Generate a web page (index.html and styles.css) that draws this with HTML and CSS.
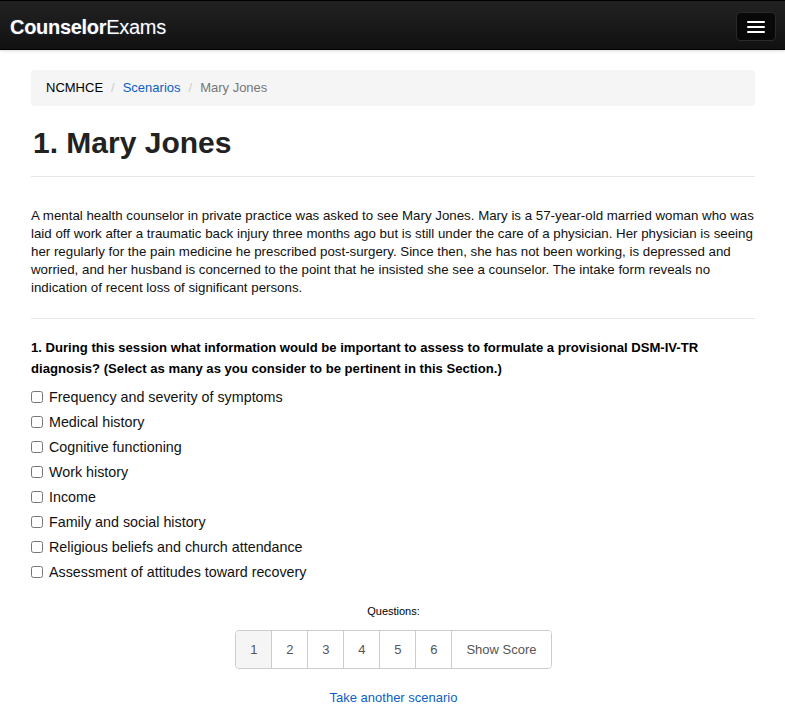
FILE: index.html
```html
<!DOCTYPE html>
<html>
<head>
<meta charset="utf-8">
<link rel="stylesheet" href="styles.css">
</head>
<body>
<nav class="navbar">
  <a class="brand"><b>Counselor</b>Exams</a>
  <button class="toggle"><span></span><span></span><span></span></button>
</nav>
<div class="container">
  <ol class="breadcrumb">
    <li>NCMHCE</li>
    <li class="sep">/</li>
    <li><a>Scenarios</a></li>
    <li class="sep">/</li>
    <li class="active">Mary Jones</li>
  </ol>
  <h2 class="page-header">1. Mary Jones</h2>
  <p class="scenario">A mental health counselor in private practice was asked to see Mary Jones. Mary is a 57-year-old married woman who was laid off work after a traumatic back injury three months ago but is still under the care of a physician. Her physician is seeing her regularly for the pain medicine he prescribed post-surgery. Since then, she has not been working, is depressed and worried, and her husband is concerned to the point that he insisted she see a counselor. The intake form reveals no indication of recent loss of significant persons.</p>
  <hr class="rule">
  <p class="question">1. During this session what information would be important to assess to formulate a provisional DSM-IV-TR diagnosis? (Select as many as you consider to be pertinent in this Section.)</p>
  <ul class="options">
    <li><label><input type="checkbox"> Frequency and severity of symptoms</label></li>
    <li><label><input type="checkbox"> Medical history</label></li>
    <li><label><input type="checkbox"> Cognitive functioning</label></li>
    <li><label><input type="checkbox"> Work history</label></li>
    <li><label><input type="checkbox"> Income</label></li>
    <li><label><input type="checkbox"> Family and social history</label></li>
    <li><label><input type="checkbox"> Religious beliefs and church attendance</label></li>
    <li><label><input type="checkbox"> Assessment of attitudes toward recovery</label></li>
  </ul>
  <div class="nav-questions">
    <div class="q-label">Questions:</div>
    <ul class="pagination">
      <li class="active">1</li>
      <li>2</li>
      <li>3</li>
      <li>4</li>
      <li>5</li>
      <li>6</li>
      <li>Show Score</li>
    </ul>
    <a class="another">Take another scenario</a>
  </div>
</div>
</body>
</html>
```
FILE: styles.css
```css
* { box-sizing: border-box; }
html, body { margin: 0; padding: 0; }
body {
  font-family: "Liberation Sans", Arial, Helvetica, sans-serif;
  color: #000;
  background: #fff;
  font-size: 13px;
  line-height: 18px;
}
.navbar {
  height: 50px;
  background: linear-gradient(#222, #111);
  border-top: 1px solid #000;
  border-bottom: 1px solid #000;
  display: flex;
  align-items: center;
  justify-content: space-between;
  padding: 0 9px 0 10px;
  box-shadow: 0 1px 3px rgba(0,0,0,0.15);
}
.brand {
  color: #fff;
  font-size: 20px;
  line-height: 24px;
  letter-spacing: -0.3px;
  margin-top: 3px;
  text-shadow: 0 0 2px rgba(120,160,255,0.35);
}
.brand b { font-weight: bold; }
.toggle {
  width: 40px;
  height: 29px;
  background: #080808;
  border: 1px solid #2a2a2a;
  border-radius: 4px;
  display: flex;
  flex-direction: column;
  align-items: center;
  justify-content: center;
  gap: 3px;
  padding: 0;
  margin-top: 3px;
}
.toggle span {
  display: block;
  width: 18px;
  height: 2px;
  background: #fff;
  border-radius: 1px;
}
.container {
  padding: 20px 30px 0 31px;
}
.breadcrumb {
  list-style: none;
  margin: 0;
  padding: 8px 15px;
  background: #f5f5f5;
  border-radius: 4px;
  display: flex;
  gap: 7px;
  height: 36px;
  align-items: center;
  font-size: 13px;
}
.breadcrumb .sep { color: #ccc; padding: 0 1px; }
.breadcrumb a { color: #0b5fc5; }
.breadcrumb .active { color: #777; }
.page-header {
  margin: 19px 0 0;
  padding: 0 0 15px 2px;
  font-size: 30px;
  line-height: 36px;
  font-weight: bold;
  color: #222;
  border-bottom: 1px solid #e6e6e6;
}
.scenario {
  margin: 30px 0 0;
  font-size: 13.3px;
  line-height: 18px;
  color: #111;
}
.rule {
  border: 0;
  border-top: 1px solid #e6e6e6;
  margin: 21px 0 0;
}
.question {
  margin: 18px 0 0;
  font-size: 13.1px;
  line-height: 21px;
  font-weight: bold;
  color: #000;
}
.options {
  list-style: none;
  margin: 5px 0 0;
  padding: 0;
}
.options li {
  height: 25px;
  display: flex;
  align-items: center;
  font-size: 14.3px;
}
.options label { display: flex; align-items: center; gap: 6px; color: #111; }
.options input {
  margin: 0;
  width: 12px;
  height: 12px;
}
.nav-questions {
  display: flex;
  flex-direction: column;
  align-items: center;
  margin-top: 20px;
  margin-left: 1px;
}
.q-label {
  font-size: 11px;
  line-height: 14px;
}
.pagination {
  list-style: none;
  margin: 12px 0 0;
  padding: 0;
  display: flex;
  border: 1px solid #ccc;
  border-radius: 4px;
  overflow: hidden;
}
.pagination li {
  padding: 9px 0;
  min-width: 36px;
  text-align: center;
  border-left: 1px solid #ccc;
  color: #555;
  line-height: 19px;
  font-size: 13px;
  background: #fff;
}
.pagination li:first-child { border-left: 0; min-width: 35px; }
.pagination li:last-child { padding: 9px 14px; }
.pagination li.active { background: #f5f5f5; }
.another {
  margin-top: 20px;
  color: #0b5fc5;
  font-size: 13px;
}
```
